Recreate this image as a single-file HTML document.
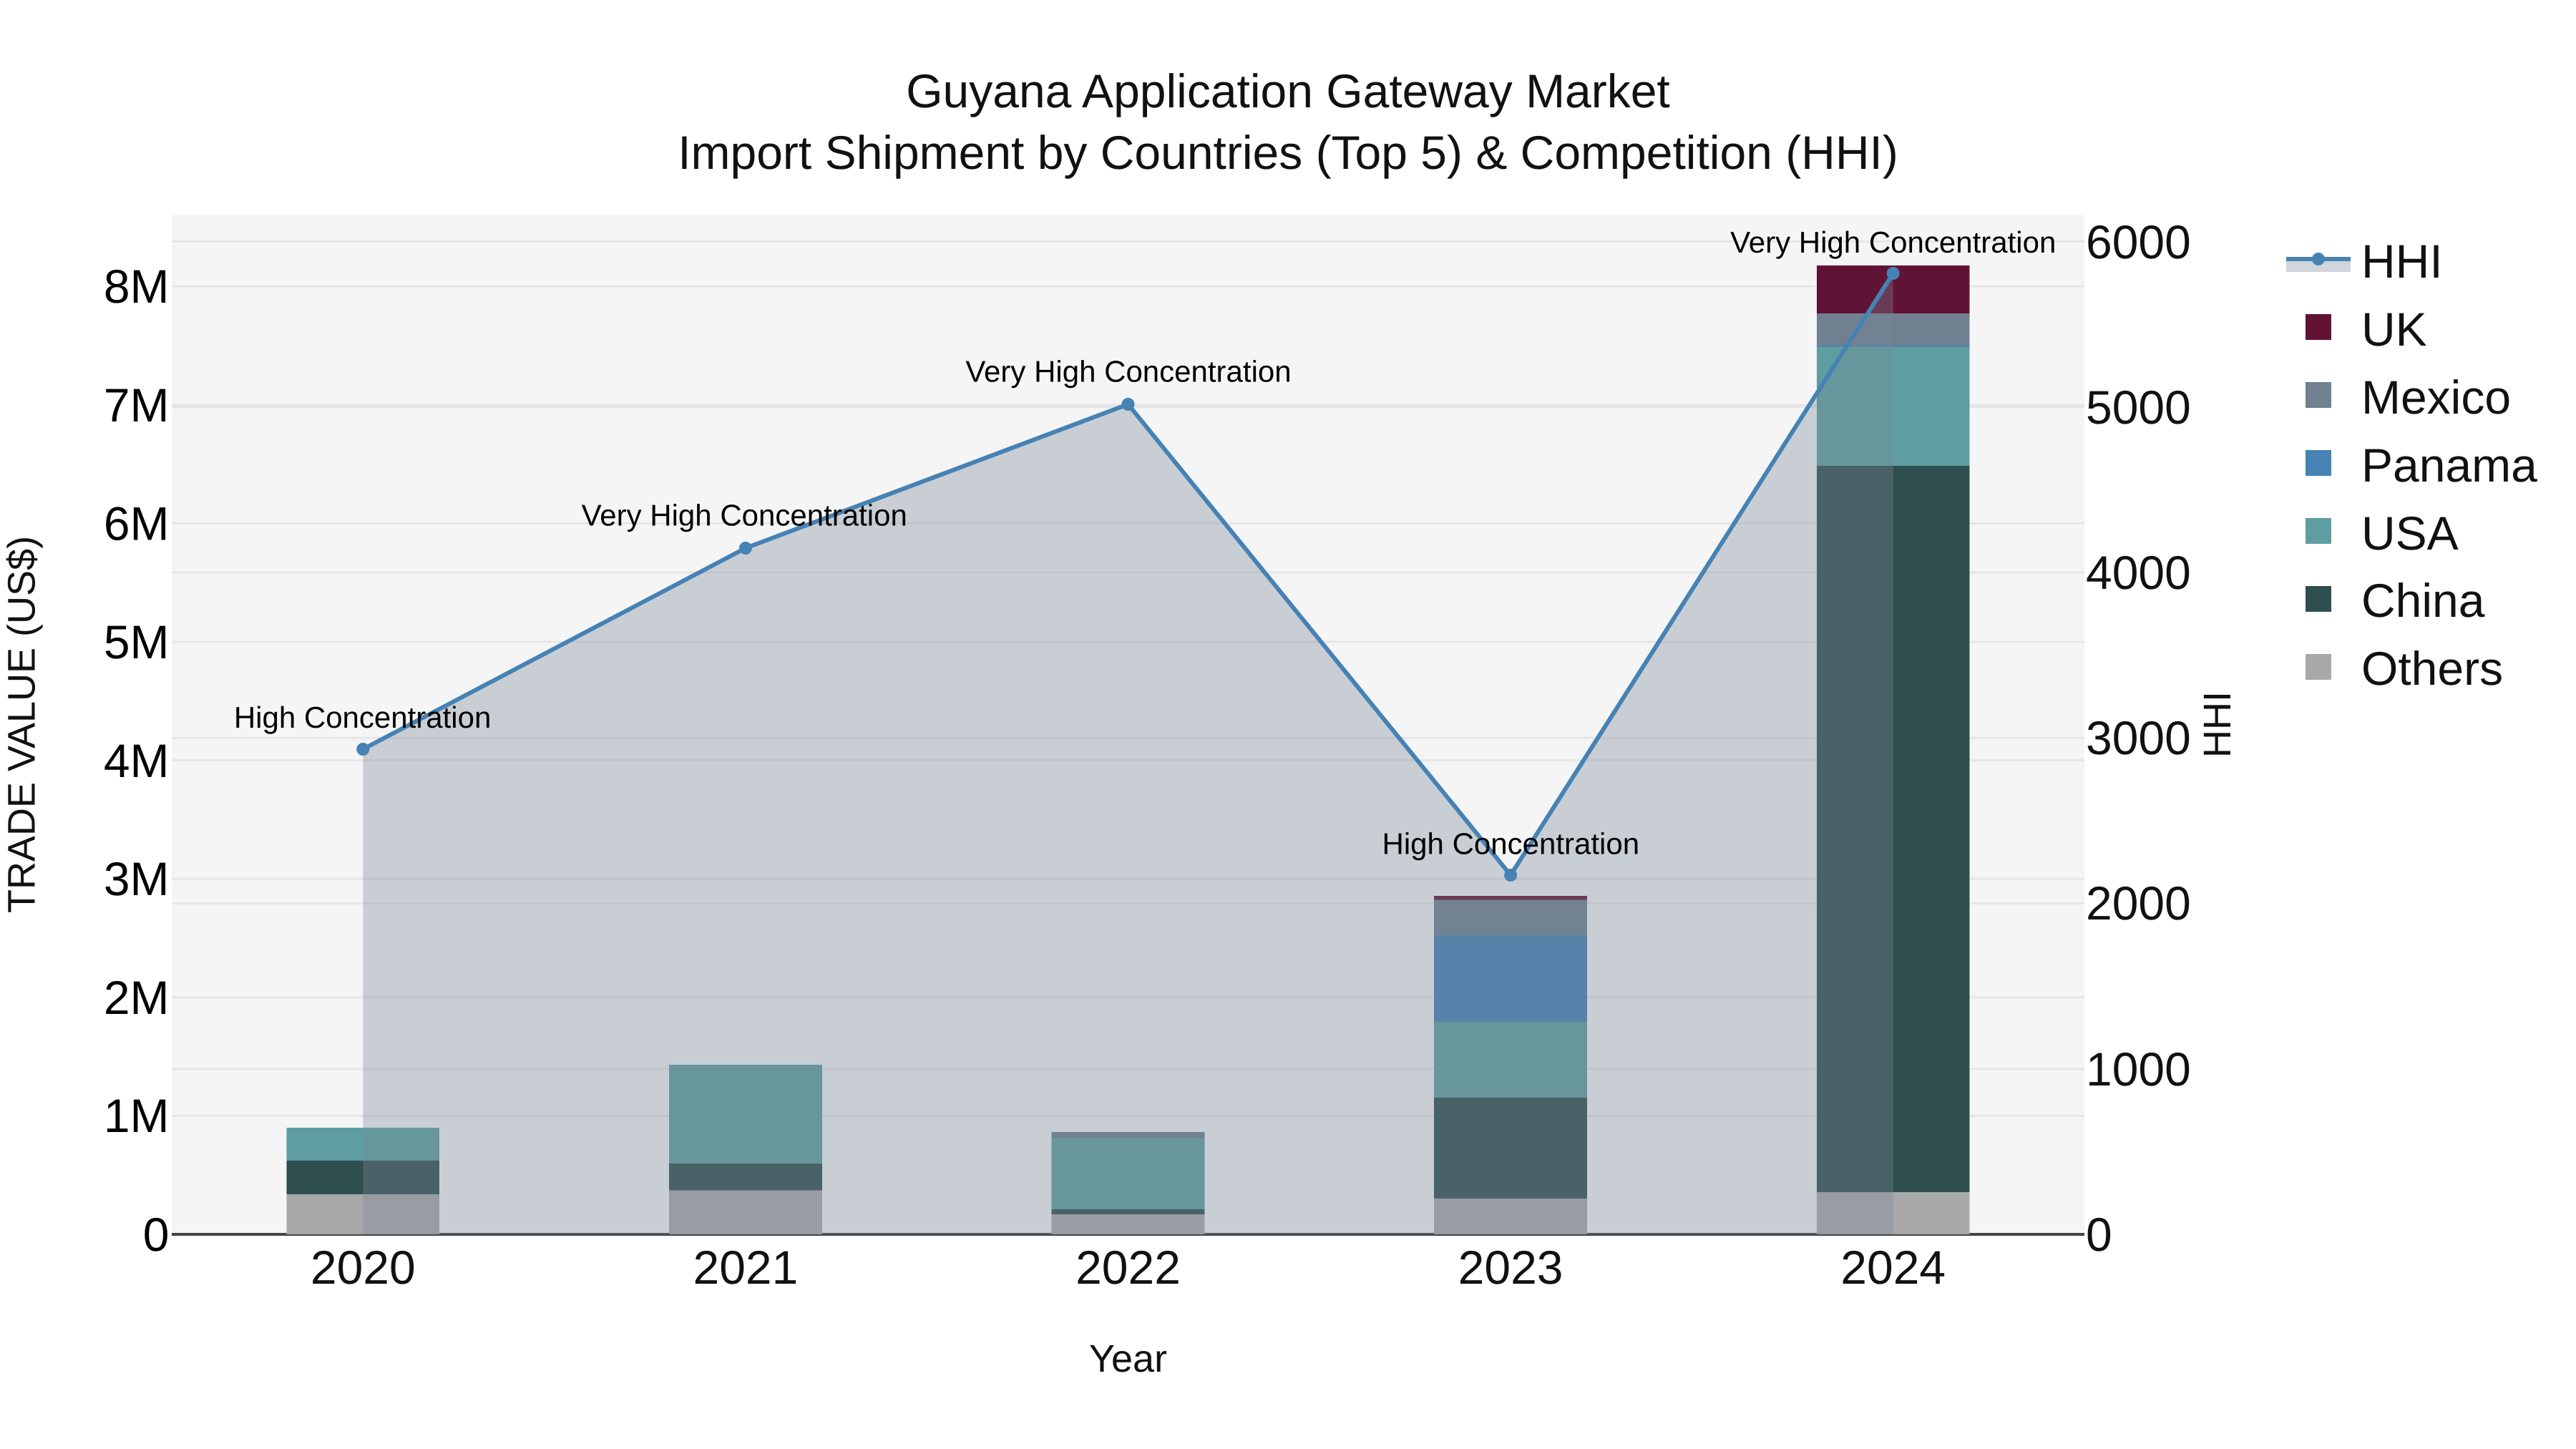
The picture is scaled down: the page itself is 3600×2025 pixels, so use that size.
<!DOCTYPE html>
<html><head><meta charset="utf-8"><style>
html,body{margin:0;padding:0;background:#fff;width:3600px;height:2025px;overflow:hidden}
svg{display:block}
text{font-family:"Liberation Sans",Arial,sans-serif;text-rendering:geometricPrecision}
</style></head><body>
<svg width="3600" height="2025" viewBox="0 0 3600 2025" xmlns="http://www.w3.org/2000/svg">
<rect width="3600" height="2025" fill="#fff"/>
<rect x="240" y="300" width="2673" height="1425" fill="#f5f5f5"/>
<g stroke="#e6e6e6" stroke-width="3">
<path d="M240 1559.4H2913M240 1393.8H2913M240 1228.2H2913M240 1062.6H2913M240 897H2913M240 731.4H2913M240 565.8H2913M240 400.2H2913"/>
<path d="M240 1493.8H2913M240 1262.5H2913M240 1031.2H2913M240 800H2913M240 568.8H2913M240 337.5H2913"/>
</g>
<rect x="240" y="1723" width="2673" height="4" fill="#444"/>
<g shape-rendering="crispEdges">
<rect x="400.4" y="1669" width="213.8" height="56" fill="#a9a9a9"/>
<rect x="400.4" y="1622" width="213.8" height="47" fill="#2f4f4f"/>
<rect x="400.4" y="1576" width="213.8" height="46" fill="#5f9ea0"/>
<rect x="935" y="1663.5" width="213.8" height="61.5" fill="#a9a9a9"/>
<rect x="935" y="1626" width="213.8" height="37.5" fill="#2f4f4f"/>
<rect x="935" y="1488" width="213.8" height="138" fill="#5f9ea0"/>
<rect x="1469.6" y="1697" width="213.8" height="28" fill="#a9a9a9"/>
<rect x="1469.6" y="1690" width="213.8" height="7" fill="#2f4f4f"/>
<rect x="1469.6" y="1590" width="213.8" height="100" fill="#5f9ea0"/>
<rect x="1469.6" y="1582" width="213.8" height="8" fill="#708090"/>
<rect x="2004.2" y="1675" width="213.8" height="50" fill="#a9a9a9"/>
<rect x="2004.2" y="1534" width="213.8" height="141" fill="#2f4f4f"/>
<rect x="2004.2" y="1428" width="213.8" height="106" fill="#5f9ea0"/>
<rect x="2004.2" y="1307" width="213.8" height="121" fill="#4682b4"/>
<rect x="2004.2" y="1257.5" width="213.8" height="49.5" fill="#708090"/>
<rect x="2004.2" y="1252" width="213.8" height="5.5" fill="#611335"/>
<rect x="2538.8" y="1666" width="213.8" height="59" fill="#a9a9a9"/>
<rect x="2538.8" y="651" width="213.8" height="1015" fill="#2f4f4f"/>
<rect x="2538.8" y="484.5" width="213.8" height="166.5" fill="#5f9ea0"/>
<rect x="2538.8" y="482.5" width="213.8" height="2" fill="#4682b4"/>
<rect x="2538.8" y="438" width="213.8" height="44.5" fill="#708090"/>
<rect x="2538.8" y="371" width="213.8" height="67" fill="#611335"/>
</g>
<path d="M507.3 1047L1041.9 766L1576.5 565L2111.1 1223L2645.7 382V1725H507.3Z" fill="#778899" fill-opacity="0.35"/>
<path d="M507.3 1047L1041.9 766L1576.5 565L2111.1 1223L2645.7 382" fill="none" stroke="#4682b4" stroke-width="6" stroke-linejoin="round"/>
<g fill="#4682b4">
<circle cx="507.3" cy="1047" r="9"/><circle cx="1041.9" cy="766" r="9"/><circle cx="1576.5" cy="565" r="9"/><circle cx="2111.1" cy="1223" r="9"/><circle cx="2645.7" cy="382" r="9"/>
</g>
<g font-size="42" fill="#000" text-anchor="middle">
<text x="506.6" y="1017">High Concentration</text>
<text x="1040.2" y="734.5">Very High Concentration</text>
<text x="1577" y="533.5">Very High Concentration</text>
<text x="2111.3" y="1193.5">High Concentration</text>
<text x="2645.7" y="353">Very High Concentration</text>
</g>
<g font-size="66" fill="#111" text-anchor="middle">
<text x="1800" y="150">Guyana Application Gateway Market</text>
<text x="1800" y="236">Import Shipment by Countries (Top 5) &amp; Competition (HHI)</text>
</g>
<g font-size="66" fill="#000" text-anchor="end">
<text x="236.5" y="1748">0</text>
<text x="236.5" y="1582">1M</text>
<text x="236.5" y="1417">2M</text>
<text x="236.5" y="1251">3M</text>
<text x="236.5" y="1086">4M</text>
<text x="236.5" y="920">5M</text>
<text x="236.5" y="754.5">6M</text>
<text x="236.5" y="589">7M</text>
<text x="236.5" y="423">8M</text>
</g>
<g font-size="66" fill="#111">
<text x="2915" y="1748">0</text>
<text x="2915" y="1517">1000</text>
<text x="2915" y="1285">2000</text>
<text x="2915" y="1054">3000</text>
<text x="2915" y="823">4000</text>
<text x="2915" y="592">5000</text>
<text x="2915" y="361">6000</text>
</g>
<g font-size="66" fill="#111" text-anchor="middle">
<text x="507.3" y="1794">2020</text>
<text x="1041.9" y="1794">2021</text>
<text x="1576.5" y="1794">2022</text>
<text x="2111.1" y="1794">2023</text>
<text x="2645.7" y="1794">2024</text>
</g>
<text x="1576.5" y="1917" font-size="54" fill="#111" text-anchor="middle">Year</text>
<text transform="translate(48.5 1012.5) rotate(-90)" font-size="54" fill="#111" text-anchor="middle">TRADE VALUE (US$)</text>
<text transform="translate(3117 1012.5) rotate(-90)" font-size="54" fill="#111" text-anchor="middle">HHI</text>
<rect x="3195" y="362" width="90" height="18" fill="#778899" fill-opacity="0.35"/>
<rect x="3195" y="359" width="90" height="6" fill="#4682b4"/>
<circle cx="3240" cy="362" r="9" fill="#4682b4"/>
<rect x="3222" y="439" width="36" height="36" fill="#611335"/>
<rect x="3222" y="534" width="36" height="36" fill="#708090"/>
<rect x="3222" y="629" width="36" height="36" fill="#4682b4"/>
<rect x="3222" y="724" width="36" height="36" fill="#5f9ea0"/>
<rect x="3222" y="819" width="36" height="36" fill="#2f4f4f"/>
<rect x="3222" y="914" width="36" height="36" fill="#a9a9a9"/>
<g font-size="66" fill="#111">
<text x="3300" y="388">HHI</text>
<text x="3300" y="483">UK</text>
<text x="3300" y="578">Mexico</text>
<text x="3300" y="673">Panama</text>
<text x="3300" y="768">USA</text>
<text x="3300" y="862">China</text>
<text x="3300" y="957">Others</text>
</g>
</svg>
</body></html>
